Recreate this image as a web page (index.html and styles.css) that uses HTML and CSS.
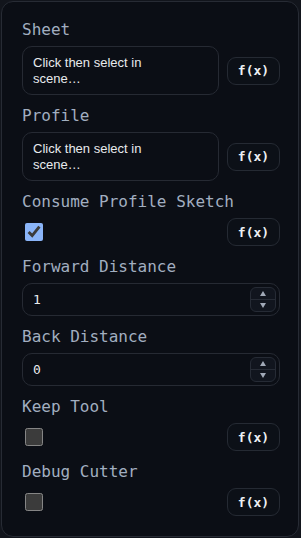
FILE: index.html
```html
<!DOCTYPE html>
<html>
<head>
<meta charset="utf-8">
<link rel="stylesheet" href="styles.css">
</head>
<body>
<div class="panel">
  <div class="field">
    <div class="label">Sheet</div>
    <div class="row">
      <div class="picker">Click then select in scene…</div>
      <button class="fx">f(x)</button>
    </div>
  </div>
  <div class="field">
    <div class="label">Profile</div>
    <div class="row">
      <div class="picker">Click then select in scene…</div>
      <button class="fx">f(x)</button>
    </div>
  </div>
  <div class="field">
    <div class="label">Consume Profile Sketch</div>
    <div class="row between">
      <input type="checkbox" class="check" checked>
      <button class="fx">f(x)</button>
    </div>
  </div>
  <div class="field">
    <div class="label">Forward Distance</div>
    <div class="num">
      <span class="val">1</span>
      <div class="spin">
        <div class="half"><span class="tri up"></span></div>
        <div class="half lower"><span class="tri down"></span></div>
      </div>
    </div>
  </div>
  <div class="field">
    <div class="label">Back Distance</div>
    <div class="num">
      <span class="val">0</span>
      <div class="spin">
        <div class="half"><span class="tri up"></span></div>
        <div class="half lower"><span class="tri down"></span></div>
      </div>
    </div>
  </div>
  <div class="field">
    <div class="label">Keep Tool</div>
    <div class="row between">
      <input type="checkbox" class="check">
      <button class="fx">f(x)</button>
    </div>
  </div>
  <div class="field">
    <div class="label">Debug Cutter</div>
    <div class="row between">
      <input type="checkbox" class="check">
      <button class="fx">f(x)</button>
    </div>
  </div>
</div>
</body>
</html>
```

FILE: styles.css
```css
html, body {
  margin: 0;
  background: #12151c;
}
body {
  padding: 1px;
  color-scheme: dark;
}
.panel {
  box-sizing: border-box;
  width: 298px;
  height: 536px;
  background: #0b0e15;
  border: 1px solid #272b34;
  border-radius: 12px;
  padding: 18px 18px 20px 20px;
  display: flex;
  flex-direction: column;
  gap: 11px;
}
.field {
  display: flex;
  flex-direction: column;
  gap: 6px;
}
.label {
  font-family: "DejaVu Sans Mono", monospace;
  font-size: 16px;
  line-height: 20px;
  color: #a2aec0;
}
.row {
  display: flex;
  align-items: center;
  gap: 8px;
}
.row.between {
  justify-content: space-between;
  height: 28px;
}
.picker {
  flex: 1;
  border: 1px solid #262a33;
  border-radius: 10px;
  padding: 8px 48px 7px 10px;
  font-family: "Liberation Sans", Arial, sans-serif;
  font-size: 13px;
  line-height: 16px;
  color: #e8eaed;
  background: #0b0e15;
}
.fx {
  box-sizing: border-box;
  width: 53px;
  height: 28px;
  flex: none;
  border: 1px solid #252a33;
  border-radius: 9px;
  background: #0c1017;
  color: #eef0f4;
  font-family: "DejaVu Sans Mono", monospace;
  font-weight: bold;
  font-size: 13px;
  padding: 0;
  margin: 0;
}
.check {
  width: 18px;
  height: 18px;
  margin: 0 0 0 3px;
  accent-color: #8ab4f8;
}
.num {
  box-sizing: border-box;
  height: 33px;
  border: 1px solid #262a33;
  border-radius: 10px;
  padding: 3px 3px 3px 10px;
  display: flex;
  align-items: stretch;
}
.val {
  flex: 1;
  align-self: center;
  font-family: "DejaVu Sans Mono", monospace;
  font-size: 13px;
  color: #e8eaed;
}
.spin {
  width: 26px;
  box-sizing: border-box;
  border: 1px solid #262b35;
  border-radius: 6px;
  background: #11151e;
  display: flex;
  flex-direction: column;
}
.half {
  flex: 1;
  display: flex;
  align-items: center;
  justify-content: center;
}
.half.lower {
  border-top: 1px solid #262b35;
}
.tri {
  width: 0;
  height: 0;
  border-left: 3.5px solid transparent;
  border-right: 3.5px solid transparent;
}
.tri.up {
  border-bottom: 5px solid #a1a9b7;
}
.tri.down {
  border-top: 5px solid #a1a9b7;
}
```
